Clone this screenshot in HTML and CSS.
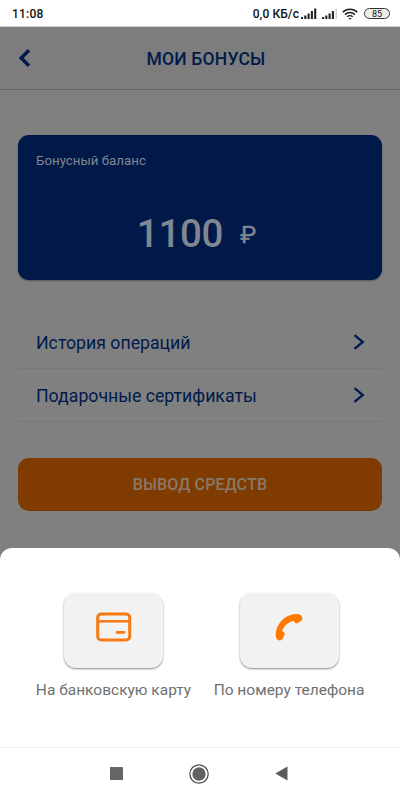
FILE: index.html
```html
<!DOCTYPE html>
<html lang="ru">
<head>
<meta charset="utf-8">
<title>Мои бонусы</title>
<link rel="stylesheet" href="styles.css">
</head>
<body>
<div class="status">
  <span class="time">11:08</span>
  <span class="speed">0,0 КБ/с</span>
  <svg class="signals" width="36" height="12" viewBox="0 0 36 12">
    <path d="M1 9v2M4.300 7.500v3.500M7.600 5.500v5.500M10.900 3v8M14.200 .5v10.500M22 9v2M25.300 7.500v3.500M28.600 5.500v5.500M31.900 3v8" stroke="#222" stroke-width="2.100"/>
    <path d="M35.200 .5v10.500" stroke="#ccc" stroke-width="1.400"/>
  </svg>
  <svg class="wifi" width="16" height="12" viewBox="0 0 16 12" fill="none" stroke="#222" stroke-width="1.500">
    <path d="M.7 4.300a10.400 10.400 0 0 1 14.600 0M3 6.600a7.100 7.100 0 0 1 10 0M5.200 8.800a4 4 0 0 1 5.600 0"/>
    <path d="M6.300 9.900h3.400L8 11.700z" fill="#222" stroke="none"/>
  </svg>
  <span class="battery">85</span>
</div>
<header class="header">
  <svg class="back" width="14" height="20" viewBox="0 0 14 20"><path d="M11 2.200L3.200 10l7.800 7.800" fill="none" stroke="#001a4b" stroke-width="3.500"/></svg>
  <h1 class="title">МОИ БОНУСЫ</h1>
</header>
<main class="content">
  <section class="card">
    <div class="label">Бонусный баланс</div>
    <div class="balance"><span class="amount">1100</span><span class="ruble">₽</span></div>
  </section>
  <nav class="links">
    <a class="row"><span>История операций</span>
      <svg width="12" height="18" viewBox="0 0 12 18"><path d="M1.500 2.200L9.800 9l-8.300 6.800" fill="none" stroke="#001a4b" stroke-width="2.300"/></svg></a>
    <a class="row"><span>Подарочные сертификаты</span>
      <svg width="12" height="18" viewBox="0 0 12 18"><path d="M1.500 2.200L9.800 9l-8.300 6.800" fill="none" stroke="#001a4b" stroke-width="2.300"/></svg></a>
  </nav>
  <button class="withdraw">ВЫВОД СРЕДСТВ</button>
</main>
<section class="sheet">
  <div class="option">
    <div class="tile">
      <svg width="36" height="30" viewBox="0 0 36 30" fill="none" stroke="#f57a14">
        <rect x="1.700" y="2" width="32" height="26" rx="3.500" stroke-width="3"/>
        <path d="M2 9.300h32" stroke-width="2.500"/><path d="M21 20.300h7" stroke-width="2.700" stroke-linecap="round"/>
      </svg>
    </div>
    <span class="caption">На банковскую карту</span>
  </div>
  <div class="option">
    <div class="tile">
      <svg width="28" height="28" viewBox="0 0 28 28"><path d="M.8 23C.4 12 9 1.300 21.500 1.100C25.200 1 27.300 2.800 27.300 5.300C27.300 7 26.400 8 25 8.700L22.200 10.200C20.700 10.900 19.200 9.400 18.800 7.700C12.500 9.500 8.500 13.500 7 18.200C9 18.700 10.200 20 9.500 21.800L7.700 25.500C7.100 26.800 6.200 27.400 4.800 27.400C2.300 27.400 1 25.700 .8 23z" fill="#ff7900"/></svg>
    </div>
    <span class="caption">По номеру телефона</span>
  </div>
</section>
<footer class="navbar">
  <svg width="13" height="13" viewBox="0 0 13 13"><rect width="13" height="13" rx=".6" fill="#666"/></svg>
  <svg width="20" height="20" viewBox="0 0 20 20"><circle cx="10" cy="10" r="9.200" fill="none" stroke="#4c4c4c" stroke-width="1.200"/><circle cx="10" cy="10" r="6.700" fill="#626262"/></svg>
  <svg width="13" height="15" viewBox="0 0 13 15"><path d="M12.500 .5v14L.3 7.500z" fill="#5c5c5c"/></svg>
</footer>
</body>
</html>
```

FILE: styles.css
```css
* { box-sizing: border-box; }
body {
  margin: 0;
  width: 400px;
  height: 800px;
  overflow: hidden;
  display: flex;
  flex-direction: column;
  background: #808080;
  font-family: Roboto, "Noto Sans", sans-serif;
}
svg { display: block; flex: none; }
.status {
  height: 27px;
  padding: 1px 10px 0 12px;
  display: flex;
  align-items: center;
  background: #fff;
  border-bottom: 1px solid #d0d0d0;
  color: #111;
  white-space: nowrap;
}
.time { font-size: 12px; font-weight: 500; letter-spacing: .2px; }
.speed { margin-left: auto; font-size: 12px; font-weight: 500; letter-spacing: .1px; }
.signals { margin-left: 2px; }
.wifi { margin-left: 5px; }
.battery {
  width: 26px;
  height: 11px;
  margin-left: 6px;
  border: 1px solid #333;
  border-radius: 6px;
  font-size: 9px;
  line-height: 10px;
  text-align: center;
  background: #eee;
}
.header {
  height: 63px;
  display: grid;
  grid-template-columns: 50px 1fr 38px;
  align-items: center;
  background: #7d7d7d;
  border-bottom: 1px solid #666;
}
.back { margin-left: 18px; }
.title {
  margin: 2px 0 0;
  color: #001a4b;
  font-size: 17.500px;
  font-weight: 500;
  letter-spacing: .2px;
  line-height: 20px;
  text-align: center;
}
.content { height: 458px; padding: 45px 18px 0; }
.card {
  height: 145px;
  padding: 17px 18px;
  border-radius: 11px;
  background: #001948;
  box-shadow: 0 1px 2px #0005;
  color: #808692;
}
.label { font-size: 13.300px; line-height: 18px; }
.balance {
  display: flex;
  align-items: baseline;
  justify-content: center;
  margin: 40px 7px 0 0;
  line-height: 48px;
}
.amount { font-size: 38.500px; font-weight: 500; letter-spacing: -.3px; }
.ruble { margin: 2px 0 0 17px; font-size: 24px; line-height: 30px; align-self: center; -webkit-text-stroke: .4px #808692; }
.links { padding-top: 36px; }
.row {
  height: 53px;
  padding: 0 17px 0 18px;
  display: flex;
  justify-content: space-between;
  align-items: center;
  border-bottom: 1px solid #777;
  color: #001a4b;
  font-size: 17.700px;
}
.row span { padding-top: 1px; }
.withdraw {
  display: block;
  width: 100%;
  height: 53px;
  margin-top: 36px;
  padding: 0;
  border: 0;
  border-radius: 11px;
  background: #803c00;
  color: #8a7868;
  font: 500 16px Roboto, sans-serif;
  letter-spacing: .15px;
}
.sheet {
  height: 199px;
  padding: 45px 23px 0 26px;
  display: grid;
  grid-template-columns: 175px 1fr;
  background: #fff;
  border-radius: 12px 12px 0 0;
}
.option { display: flex; flex-direction: column; align-items: center; }
.tile {
  width: 99px;
  height: 75px;
  padding-bottom: 7px;
  display: flex;
  align-items: center;
  justify-content: center;
  border-radius: 12px;
  background: #f2f2f2;
  box-shadow: 0 1px 2px #0007;
}
.caption {
  margin-top: 12px;
  color: #707070;
  font-size: 15.500px;
  line-height: 20px;
  white-space: nowrap;
}
.navbar {
  height: 53px;
  padding: 0 112px 1px 110px;
  display: flex;
  align-items: center;
  justify-content: space-between;
  background: #fff;
  border-top: 1px solid #f2f2f2;
}
```
